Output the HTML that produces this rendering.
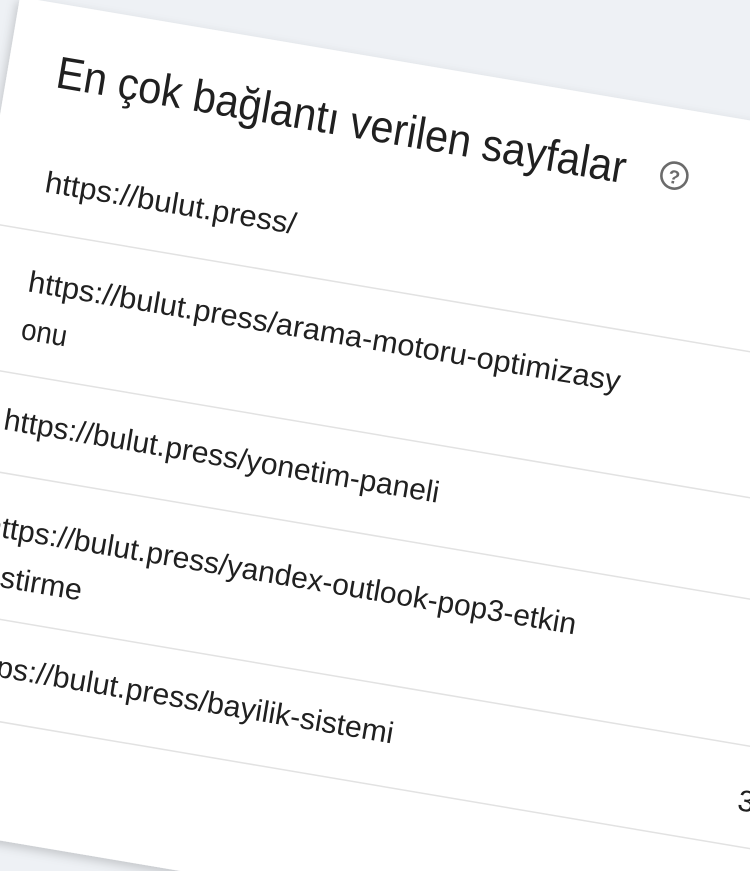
<!DOCTYPE html>
<html><head><meta charset="utf-8"><style>
html,body{margin:0;padding:0;width:750px;height:871px;overflow:hidden;background:#eef1f5}
svg{display:block}
text{font-family:"Liberation Sans",Arial,sans-serif;fill:#202020}
</style></head><body>
<svg width="750" height="871" viewBox="0 0 750 871" xmlns="http://www.w3.org/2000/svg" overflow="hidden">
<defs>
<filter id="sh" x="-10%" y="-10%" width="120%" height="120%">
<feDropShadow dx="-2" dy="4" stdDeviation="5" flood-color="#000" flood-opacity="0.18"/>
</filter>
<clipPath id="c"><rect width="750" height="871"/></clipPath>
</defs>
<rect width="750" height="871" fill="#eef1f5"/>
<g clip-path="url(#c)">
<g transform="translate(20,-3) rotate(9.6)">
<rect x="0" y="0" width="1000" height="835" fill="#fff" filter="url(#sh)"/>
<text x="49" y="83" font-size="45" textLength="577" lengthAdjust="spacingAndGlyphs">En çok bağlantı verilen sayfalar</text>
<circle cx="675" cy="67" r="13" fill="none" stroke="#6b6b6b" stroke-width="2.6"/>
<text x="675" y="75" font-size="19" font-weight="bold" text-anchor="middle" style="fill:#6b6b6b">?</text>
<g font-size="30">
<text x="56" y="188" textLength="254" lengthAdjust="spacingAndGlyphs">https://bulut.press/</text>
<line x1="-50" y1="228" x2="1000" y2="228" stroke="#e2e2e2" stroke-width="1.5"/>
<text x="56" y="289" textLength="600" lengthAdjust="spacingAndGlyphs">https://bulut.press/arama-motoru-optimizasy</text>
<text x="57" y="337" textLength="46" lengthAdjust="spacingAndGlyphs">onu</text>
<line x1="-50" y1="372" x2="1000" y2="372" stroke="#e2e2e2" stroke-width="1.5"/>
<text x="55" y="429" textLength="441" lengthAdjust="spacingAndGlyphs">https://bulut.press/yonetim-paneli</text>
<line x1="-50" y1="472" x2="1000" y2="472" stroke="#e2e2e2" stroke-width="1.5"/>
<text x="54" y="536" textLength="599" lengthAdjust="spacingAndGlyphs">https://bulut.press/yandex-outlook-pop3-etkin</text>
<text x="54" y="585" textLength="106" lengthAdjust="spacingAndGlyphs">lestirme</text>
<line x1="-50" y1="617" x2="1000" y2="617" stroke="#e2e2e2" stroke-width="1.5"/>
<text x="55" y="674" textLength="436" lengthAdjust="spacingAndGlyphs">https://bulut.press/bayilik-sistemi</text>
<text x="842" y="682">3</text>
<line x1="-50" y1="718" x2="1000" y2="718" stroke="#e2e2e2" stroke-width="1.5"/>
</g>
</g>
</g>
</svg>
</body></html>
